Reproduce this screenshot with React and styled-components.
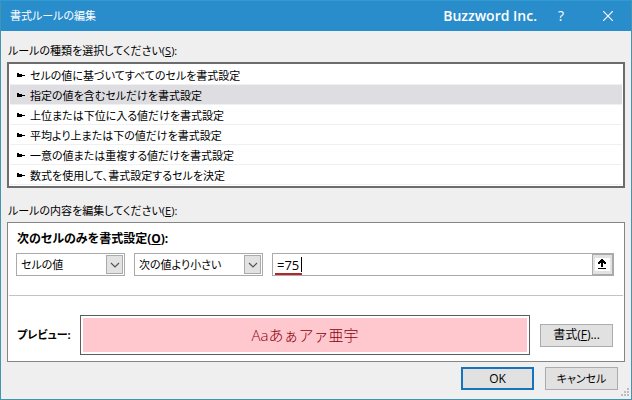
import React, { useState } from "react";
import styled, { createGlobalStyle } from "styled-components";

const GlobalStyle = createGlobalStyle`
  *, *::before, *::after { box-sizing: border-box; }
  body {
    margin: 0;
    color: #000;
    font-family: "Open Sans", "Noto Sans CJK JP", sans-serif;
    font-size: 11px;
    line-height: 20px;
    font-feature-settings: "palt";
  }
  button, input, select {
    font: inherit;
    font-feature-settings: inherit;
    color: inherit;
    border-radius: 0;
    margin: 0;
  }
`;

const Dialog = styled.main`
  position: relative;
  display: flex;
  flex-direction: column;
  min-height: 100vh;
  background: #efefef;
  border: 1px solid #4295b1;
  border-top-color: #2f9bd0;
`;

const TitleBar = styled.header`
  display: flex;
  align-items: center;
  height: 30px;
  padding-left: 9px;
  background: #2a8dcb;
  color: #fff;
`;

const Title = styled.h1`
  flex: 1;
  margin: 0;
  font-size: 11px;
  font-weight: 400;
`;

const Brand = styled.span`
  font-size: 14px;
  font-weight: 600;
`;

const TitleButton = styled.button`
  display: flex;
  align-items: center;
  justify-content: center;
  width: ${(p) => (p.$wide ? "46px" : "48px")};
  height: 28px;
  padding: 0;
  border: 0;
  background: transparent;
  color: #fff;
  font-size: 14px;
`;

const Content = styled.div`
  display: flex;
  flex-direction: column;
  padding: 9px 6px 0;
`;

const SectionLabel = styled.h2`
  margin: 0;
  padding-left: 1px;
  font-size: 11px;
  font-weight: 400;
  line-height: 22px;
`;

const RuleList = styled.div`
  display: flex;
  flex-direction: column;
  margin-bottom: 12px;
  padding: 1px;
  border: 2px solid #6c6c6c;
  background: #fff;
`;

const RuleRow = styled.button`
  display: flex;
  align-items: center;
  gap: 5px;
  height: 20px;
  padding: 2px 0 0 7px;
  border: 0;
  border-bottom: 1px solid #f0f0f0;
  background: ${(p) => (p.$selected ? "#dedde2" : "#fff")};
  text-align: left;
`;

const Panel = styled.section`
  border: 1px solid #858585;
  background: #fff;
`;

const PanelHeading = styled.h3`
  margin: 0;
  padding: 6px 9px 4px;
  font-size: 12px;
  font-weight: 700;
`;

const Criteria = styled.div`
  display: flex;
  gap: 9px;
  padding: 0 10px 19px 8px;
`;

const SelectBox = styled.div`
  position: relative;
  flex: none;
  width: ${(p) => (p.$wide ? "129px" : "109px")};
  height: 23px;
`;

const Select = styled.select`
  appearance: none;
  width: 100%;
  height: 23px;
  padding: 0 20px 0 4px;
  border: 1px solid #aaa;
  background: #fff;
`;

const SelectArrow = styled.span`
  position: absolute;
  top: 2px;
  right: 2px;
  display: flex;
  align-items: center;
  justify-content: center;
  width: 17px;
  height: 19px;
  border: 1px solid #aaa;
  background: #e2e2e2;
  pointer-events: none;
`;

const ValueBox = styled.div`
  position: relative;
  display: flex;
  flex: 1;
  height: 23px;
  border: 1px solid #aaa;
  background: #fff;
`;

const ValueInput = styled.input`
  flex: 1;
  min-width: 0;
  padding: 0 4px;
  border: 0;
  outline: 0;
  background: transparent;
  font-size: 13px;
`;

const Marker = styled.span`
  position: absolute;
  left: 2px;
  bottom: 0;
  width: 27px;
  height: 2px;
  background: #b3262c;
`;

const Caret = styled.span`
  position: absolute;
  left: 28px;
  top: 3px;
  width: 1px;
  height: 15px;
  background: #000;
`;

const PickButton = styled.button`
  display: flex;
  width: 21px;
  padding: 2px;
  border: 1px solid #aaa;
  background: #e2e2e2;
`;

const Divider = styled.hr`
  width: auto;
  height: 1px;
  margin: 0 1px;
  border: 0;
  background: #c3c3c3;
`;

const PreviewRow = styled.div`
  display: flex;
  align-items: center;
  gap: 10px;
  padding: 19px 11px 6px 9px;
`;

const PreviewLabel = styled.span`
  width: 53px;
  font-weight: 700;
  white-space: nowrap;
`;

const PreviewFrame = styled.div`
  flex: 1;
  height: 40px;
  padding: 2px;
  border: 1px solid #5c5c5c;
  background: #fff;
`;

const PreviewSample = styled.div`
  display: flex;
  align-items: center;
  justify-content: center;
  height: 100%;
  background: #ffc7ce;
  color: #8c000c;
  font-feature-settings: normal;
  font-size: 15px;
  font-weight: 300;
`;

const Button = styled.button`
  flex: none;
  width: 73px;
  height: 23px;
  padding: 0;
  font-size: ${(p) => p.$size || "11px"};
  line-height: 18px;
  border: ${(p) => (p.$primary ? "2px solid #1673bd" : "1px solid #acacac")};
  background: #e1e1e1;
`;

const Footer = styled.footer`
  display: flex;
  justify-content: flex-end;
  gap: 11px;
  padding: 5px 7px 0 0;
`;

const Grip = styled.svg`
  position: absolute;
  right: 1px;
  bottom: 2px;
`;

const rules = [
  "セルの値に基づいてすべてのセルを書式設定",
  "指定の値を含むセルだけを書式設定",
  "上位または下位に入る値だけを書式設定",
  "平均より上または下の値だけを書式設定",
  "一意の値または重複する値だけを書式設定",
  "数式を使用して、書式設定するセルを決定",
];

function RowArrow() {
  return (
    <svg width="8" height="5" viewBox="0 0 8 5" aria-hidden="true">
      <path d="M0 0H2V1H5V2H8V3H5V4H0Z" fill="#000" />
    </svg>
  );
}

function DropDown({ label, wide, children }) {
  return (
    <SelectBox $wide={wide}>
      <Select aria-label={label}>{children}</Select>
      <SelectArrow>
        <svg width="10" height="6" viewBox="0 0 10 6" aria-hidden="true">
          <path d="M1 1 L5 5 L9 1" fill="none" stroke="#505050" strokeWidth="1.1" />
        </svg>
      </SelectArrow>
    </SelectBox>
  );
}

export default function App() {
  const [selected, setSelected] = useState(1);
  const [value, setValue] = useState("=75");

  return (
    <>
      <GlobalStyle />
      <Dialog>
        <TitleBar>
          <Title>書式ルールの編集</Title>
          <Brand>Buzzword Inc.</Brand>
          <TitleButton aria-label="ヘルプ">?</TitleButton>
          <TitleButton $wide aria-label="閉じる">
            <svg width="10" height="10" viewBox="0 0 10 10" aria-hidden="true">
              <path d="M0 0 L10 10 M10 0 L0 10" stroke="#fff" strokeWidth="1.2" />
            </svg>
          </TitleButton>
        </TitleBar>

        <Content>
          <SectionLabel id="kind">
            ルールの種類を選択してください(<u>S</u>):
          </SectionLabel>
          <RuleList role="listbox" aria-labelledby="kind">
            {rules.map((rule, i) => (
              <RuleRow
                key={rule}
                role="option"
                aria-selected={i === selected}
                $selected={i === selected}
                onClick={() => setSelected(i)}
              >
                <RowArrow />
                {rule}
              </RuleRow>
            ))}
          </RuleList>

          <SectionLabel id="detail">
            ルールの内容を編集してください(<u>E</u>):
          </SectionLabel>
          <Panel aria-labelledby="detail">
            <PanelHeading id="only">
              次のセルのみを書式設定(<u>O</u>):
            </PanelHeading>
            <Criteria role="group" aria-labelledby="only">
              <DropDown label="対象">
                <option>セルの値</option>
              </DropDown>
              <DropDown label="条件" wide>
                <option>次の値より小さい</option>
              </DropDown>
              <ValueBox>
                <ValueInput
                  aria-label="値"
                  value={value}
                  onChange={(e) => setValue(e.target.value)}
                />
                <Marker />
                <Caret />
                <PickButton aria-label="範囲を選択">
                  <svg width="15" height="15" viewBox="0 0 15 15" aria-hidden="true">
                    <path d="M0 1H15V14H0Z" fill="#fff" />
                    <path
                      d="M6 2H8V3H9V4H10V5H11V7H9V6H8V10H6V6H5V7H3V5H4V4H5V3H6Z M3 11H11V12H3Z"
                      fill="#000"
                    />
                  </svg>
                </PickButton>
              </ValueBox>
            </Criteria>
            <Divider />
            <PreviewRow>
              <PreviewLabel>プレビュー:</PreviewLabel>
              <PreviewFrame>
                <PreviewSample>Aaあぁアァ亜宇</PreviewSample>
              </PreviewFrame>
              <Button $size="12px">
                書式(<u>F</u>)...
              </Button>
            </PreviewRow>
          </Panel>

          <Footer>
            <Button $primary $size="12px">OK</Button>
            <Button>キャンセル</Button>
          </Footer>
        </Content>

        <Grip width="9" height="9" viewBox="0 0 9 9" aria-hidden="true">
          <path
            d="M6 0h2v2h-2z M3 3h2v2h-2z M6 3h2v2h-2z M0 6h2v2h-2z M3 6h2v2h-2z M6 6h2v2h-2z"
            fill="#bdbdbd"
          />
        </Grip>
      </Dialog>
    </>
  );
}
